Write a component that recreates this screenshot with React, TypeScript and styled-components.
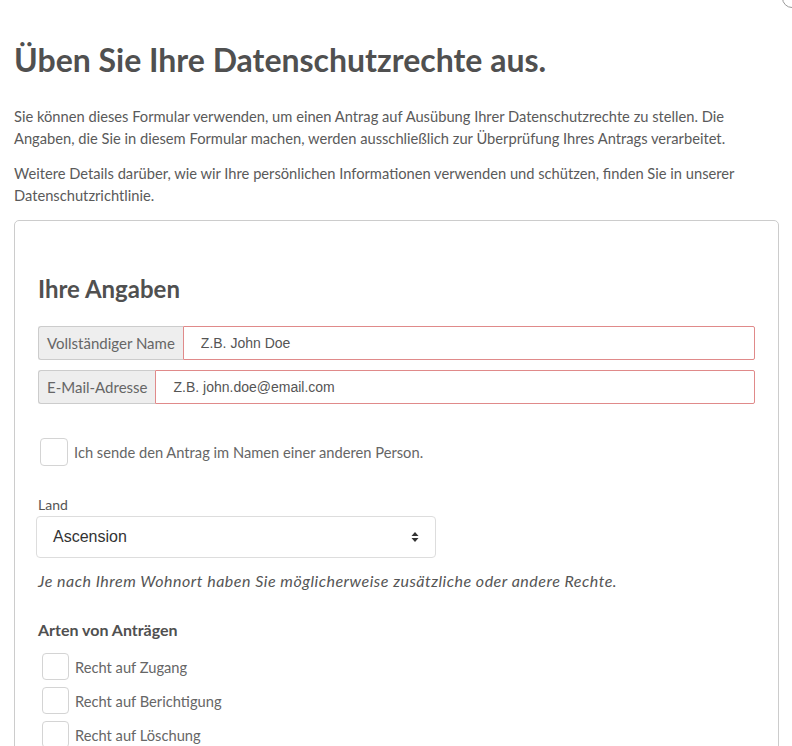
import React from 'react';
import styled, {createGlobalStyle} from "styled-components";

const GlobalStyle = createGlobalStyle`
    html, body {
        margin: 0;
        padding: 0;
        background: #fff;
    }
    body {
        font-family: Lato, "Noto Sans", sans-serif;
        color: #555;
    }
    * {
        box-sizing: border-box;
    }
`

const rights = ["Recht auf Zugang", "Recht auf Berichtigung", "Recht auf Löschung"];

export default function App() {
    return (
        <>
            <GlobalStyle/>
            <Page>
                <CloseButton/>
                <Title>Üben Sie Ihre Datenschutzrechte aus.</Title>
                <Intro>
                    Sie können dieses Formular verwenden, um einen Antrag auf Ausübung Ihrer Datenschutzrechte zu
                    stellen. Die Angaben, die Sie in diesem Formular machen, werden ausschließlich zur Überprüfung
                    Ihres Antrags verarbeitet.
                </Intro>
                <Intro>
                    Weitere Details darüber, wie wir Ihre persönlichen Informationen verwenden und schützen, finden
                    Sie in unserer Datenschutzrichtlinie.
                </Intro>
                <Card>
                    <CardTitle>Ihre Angaben</CardTitle>
                    <InputGroup>
                        <Addon>Vollständiger Name</Addon>
                        <TextInput placeholder="Z.B. John Doe"/>
                    </InputGroup>
                    <InputGroup>
                        <Addon>E-Mail-Adresse</Addon>
                        <TextInput placeholder="Z.B. john.doe@email.com"/>
                    </InputGroup>

                    <CheckRow $big>
                        <Box $big/>
                        <CheckLabel>Ich sende den Antrag im Namen einer anderen Person.</CheckLabel>
                    </CheckRow>

                    <FieldLabel>Land</FieldLabel>
                    <Select>
                        <span>Ascension</span>
                        <svg width="8" height="12" viewBox="0 0 8 12">
                            <path d="M4 1 L7.5 5 H0.5 Z M4 11 L0.5 7 H7.5 Z" fill="#333"/>
                        </svg>
                    </Select>
                    <Hint>Je nach Ihrem Wohnort haben Sie möglicherweise zusätzliche oder andere Rechte.</Hint>

                    <SectionTitle>Arten von Anträgen</SectionTitle>
                    <CheckList>
                        {rights.map(r => (
                            <CheckRow key={r}>
                                <Box/>
                                <CheckLabel>{r}</CheckLabel>
                            </CheckRow>
                        ))}
                    </CheckList>
                </Card>
            </Page>
        </>
    );
}

const Page = styled.div`
    position: relative;
    padding: 35px 13px 0 14px;
    height: 746px;
    overflow: hidden;
`
const CloseButton = styled.div`
    position: absolute;
    top: -12px;
    right: -10px;
    width: 20px;
    height: 20px;
    border-radius: 50%;
    border: 1px solid #999;
    background: #fff;
`
const Title = styled.h1`
    margin: 0 0 20px;
    font-size: 32px;
    line-height: 50px;
    font-weight: 700;
    color: #505050;
`
const Intro = styled.p`
    margin: 0 0 13px;
    font-size: 14.7px;
    line-height: 22px;
    color: #5a5a5a;
`
const Card = styled.div`
    border: 1px solid #ccc;
    border-radius: 5px;
    padding: 52px 23px 0 23px;
    margin-top: 14px;
    min-height: 600px;
`
const CardTitle = styled.h2`
    margin: 0 0 21px;
    font-size: 24px;
    line-height: 32px;
    font-weight: 700;
    color: #505050;
`
const InputGroup = styled.div`
    display: flex;
    height: 34px;
    margin-bottom: 10px;
`
const Addon = styled.span`
    display: flex;
    align-items: center;
    padding: 0 8px;
    background: #eee;
    border: 1px solid #ccc;
    border-right: none;
    border-radius: 3px 0 0 3px;
    font-size: 15px;
    color: #666;
    white-space: nowrap;
`
const TextInput = styled.input`
    flex: 1;
    border: 1px solid #e08a8a;
    border-radius: 0 2px 2px 0;
    padding: 0 17px;
    font-family: "Liberation Sans", Arial, sans-serif;
    font-size: 14px;
    outline: none;
    &::placeholder {
        color: #555;
    }
`
const CheckRow = styled.label<{ $big?: boolean }>`
    display: flex;
    align-items: center;
    gap: 6px;
    margin: ${p => p.$big ? "34px 0 30px 2px" : "0 0 0 4px"};
`
const Box = styled.span<{ $big?: boolean }>`
    width: ${p => p.$big ? 28 : 27}px;
    height: ${p => p.$big ? 28 : 27}px;
    border: 1px solid #d4d4d4;
    border-radius: 4px;
    background: #fff;
    flex-shrink: 0;
`
const CheckLabel = styled.span`
    font-size: 14.7px;
    color: #666;
`
const FieldLabel = styled.div`
    font-size: 14px;
    line-height: 18px;
    margin-bottom: 2px;
    color: #555;
`
const Select = styled.div`
    display: flex;
    align-items: center;
    justify-content: space-between;
    width: 400px;
    height: 42px;
    margin-left: -2px;
    padding: 0 16px 0 16px;
    border: 1px solid #ddd;
    border-radius: 4px;
    font-family: "Liberation Sans", Arial, sans-serif;
    font-size: 16px;
    color: #333;
`
const Hint = styled.p`
    margin: 11px 0 0;
    font-size: 16px;
    line-height: 24px;
    font-style: italic;
    letter-spacing: 0.5px;
    color: #555;
`
const SectionTitle = styled.h3`
    margin: 26px 0 12px;
    font-size: 16px;
    line-height: 22px;
    font-weight: 700;
    color: #505050;
`
const CheckList = styled.div`
    display: flex;
    flex-direction: column;
    gap: 7px;
`
